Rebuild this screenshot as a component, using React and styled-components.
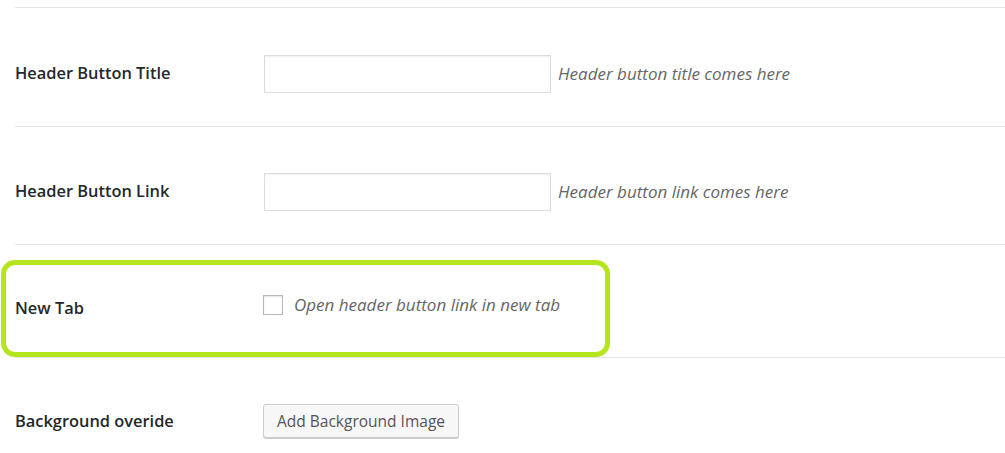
import React from "react";
import styled, { createGlobalStyle } from "styled-components";

const GlobalStyle = createGlobalStyle`
  body {
    margin: 0;
    background: #fff;
    font-family: "Open Sans", "Noto Sans", sans-serif;
    color: #23282d;
  }
`;

export default function App() {
  return (
    <>
      <GlobalStyle />
      <Page>
        <Row $pt={47} $pb={33}>
          <Label $offset={-3}>Header Button Title</Label>
          <Field>
            <TextInput type="text" />
            <Description>Header button title comes here</Description>
          </Field>
        </Row>

        <Row $pt={46} $pb={33}>
          <Label $offset={-2}>Header Button Link</Label>
          <Field>
            <TextInput type="text" />
            <Description>Header button link comes here</Description>
          </Field>
        </Row>

        <Row $pt={49} $pb={38} $align="start">
          <Label $offset={3}>New Tab</Label>
          <Field>
            <CheckLabel>
              <Checkbox type="checkbox" />
              <Description>Open header button link in new tab</Description>
            </CheckLabel>
          </Field>
          <Highlight />
        </Row>

        <Row $pt={46} $pb={20}>
          <Label>Background overide</Label>
          <Field>
            <Button type="button">Add Background Image</Button>
          </Field>
        </Row>
      </Page>
    </>
  );
}

const Page = styled.div`
  padding: 7px 0 0 15px;
`;

const Row = styled.div`
  position: relative;
  display: grid;
  grid-template-columns: 248px 1fr;
  align-items: ${(p) => p.$align || "center"};
  padding: ${(p) => p.$pt}px 0 ${(p) => p.$pb}px;
  border-top: 1px solid #e5e5e5;
`;

const Label = styled.div`
  font-size: 16.4px;
  font-weight: 600;
  line-height: 22px;
  color: #23282d;
  margin-top: ${(p) => p.$offset || 0}px;
`;

const Field = styled.div`
  display: flex;
  align-items: center;
  gap: 7px;
`;

const TextInput = styled.input`
  box-sizing: border-box;
  width: 287px;
  height: 38px;
  margin: 0 0 0 1px;
  padding: 4px 8px;
  border: 1px solid #dddddd;
  border-radius: 0;
  background: #fff;
  box-shadow: inset 0 1px 2px rgba(0, 0, 0, 0.07);
  font: inherit;
  outline: none;
`;

const Description = styled.span`
  font-size: 17px;
  font-style: italic;
  color: #666;
  line-height: 22px;
`;

const CheckLabel = styled.label`
  display: flex;
  align-items: center;
  gap: 11px;
`;

const Checkbox = styled.input`
  appearance: none;
  box-sizing: border-box;
  width: 20px;
  height: 20px;
  margin: 0;
  border: 1px solid #b4b9be;
  background: #fff;
  box-shadow: inset 0 1px 2px rgba(0, 0, 0, 0.1);
`;

const Button = styled.button`
  box-sizing: border-box;
  height: 34px;
  padding: 0 13px;
  border: 1px solid #cccccc;
  border-radius: 3px;
  background: #f7f7f7;
  box-shadow: 0 1px 0 #cccccc;
  color: #555;
  font-family: inherit;
  font-size: 15.5px;
  line-height: 32px;
  cursor: pointer;
`;

// the lime annotation ring drawn over the "New Tab" row
const Highlight = styled.div`
  position: absolute;
  left: -14px;
  top: 15px;
  width: 609px;
  height: 97px;
  box-sizing: border-box;
  border: 5px solid #b5e61d;
  border-radius: 14px;
  pointer-events: none;
`;
